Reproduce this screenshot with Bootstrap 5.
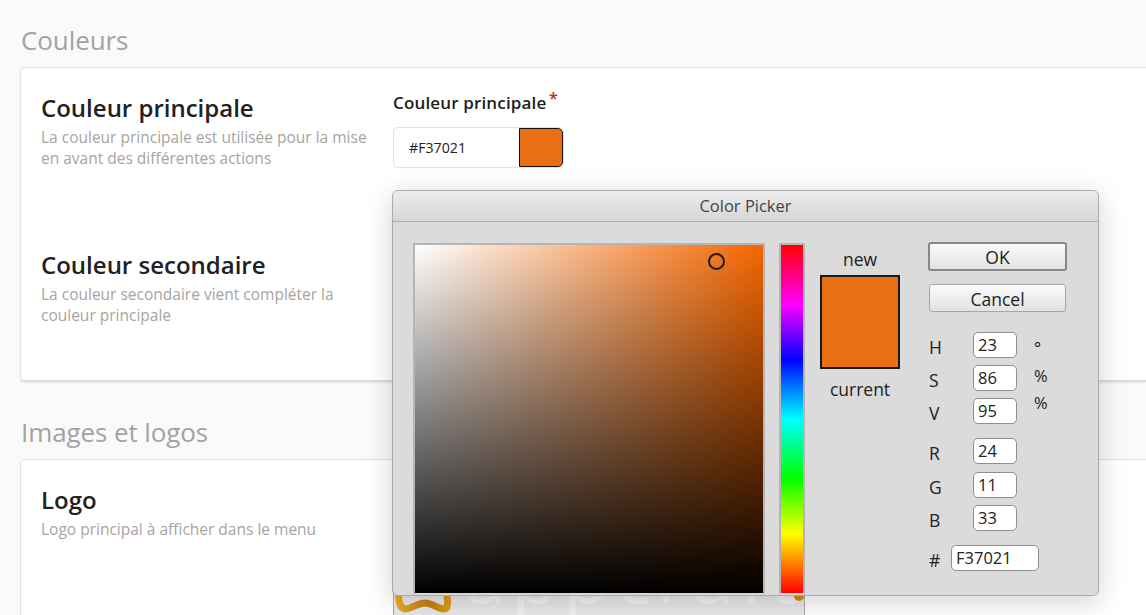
<!DOCTYPE html>
<html lang="fr">
<head>
  <meta charset="UTF-8" />
  <meta name="viewport" content="width=device-width, initial-scale=1.0"/>
  <title>Couleurs</title>
  <link href="https://cdn.jsdelivr.net/npm/bootstrap@5.3.0/dist/css/bootstrap.min.css" rel="stylesheet"/>
  <style>
    html, body { height: 100%; overflow: hidden; }
    body {
      font-family: "Open Sans", "Noto Sans", sans-serif;
      background-color: #fafafa;
      color: #212121;
    }
    .page-wrap { padding: 22px 0 0 20px; position: relative; }
    .section-title { font-size: 26px; line-height: 36px; font-weight: 400; color: #a3a3a3; margin: 0 0 9px 1px; letter-spacing: -.1px; }
    .panel-box { background: #fff; border: 1px solid #e2e2e2; border-right: 0; border-bottom: 2px solid #dcdcdc; border-radius: 5px 0 0 5px; padding: 23px 20px 0; }
    .panel-colors { height: 315px; margin-bottom: 32px; box-shadow: 0 1px 2px rgba(0,0,0,.08); }
    .panel-logo { height: 156px; padding-top: 23px; overflow: hidden; border-bottom: 0; border-radius: 5px 0 0 0; }
    .side-col { width: 352px; flex: none; }
    .block-title { font-size: 24px; line-height: 34px; font-weight: 600; margin: 0; }
    .block-help { font-size: 15.5px; line-height: 21px; color: #a8a4a0; margin: 2px 0 0; }
    .block-second { margin-top: 79px; }
    .field-label { font-size: 17px; line-height: 22px; font-weight: 600; letter-spacing: .15px; margin-top: 1px; margin-bottom: 13px; }
    .field-label sup { color: #c62828; font-size: 16px; top: -.3em; margin-left: -2px; }
    .color-field { width: 171px; height: 41px; border: 1px solid #e2e2e2; border-radius: 5px; font-size: 14.2px; padding-left: 15px; overflow: hidden; }
    .color-swatch { width: 44px; height: 100%; background: #e86f14; border: 1px solid #111; border-radius: 0 5px 5px 0; }
    .logo-box { width: 412px; height: 147px; margin-top: -15px; border: 1px solid #a8a8a8; border-bottom: 0; background: #e8e8e8; position: relative; overflow: hidden; }
    .logo-word { position: absolute; left: 70px; top: 62px; font-size: 78px; line-height: 84px; font-weight: 400; color: #f2f2f2; letter-spacing: 4px; white-space: nowrap; }
    .logo-dot { position: absolute; left: 400px; top: 122px; width: 10px; height: 10px; border-radius: 50%; background: #d98a14; }
    .logo-mark { position: absolute; left: 0; top: 117px; }

    .picker { position: absolute; left: 392px; top: 190px; width: 707px; height: 406px; background: #dbdbdb; border: 1px solid #aaa; border-radius: 6px; box-shadow: 0 6px 28px rgba(0,0,0,.18); font-size: 17.5px; color: #222; }
    .picker-head { height: 31px; line-height: 30px; text-align: center; font-size: 16.5px; color: #444; border-bottom: 1px solid #b0b0b0; background: linear-gradient(#ececec, #d6d6d6); border-radius: 5px 5px 0 0; }
    .picker-body { padding: 21px 0 0 20px; height: 373px; }
    .sat-box { width: 352px; height: 352px; border: 2px solid #b5b5b5; border-bottom-color: #d8d8d8; flex: none; position: relative; background: linear-gradient(to bottom, rgba(0,0,0,0), #000), linear-gradient(to right, #fff, #f56600); }
    .sat-cursor { position: absolute; left: 293px; top: 8px; width: 17px; height: 17px; border: 2px solid #1c1c1c; border-radius: 50%; }
    .hue-bar { width: 26px; height: 352px; flex: none; margin-left: 14px; border: 2px solid #b5b5b5; border-bottom-color: #d8d8d8; background: linear-gradient(to bottom, #f00 0%, #f0f 17%, #00f 33%, #0ff 50%, #0f0 67%, #ff0 83%, #f00 100%); }
    .preview-col { width: 80px; flex: none; margin-left: 15px; text-align: center; line-height: 22px; padding-top: 5px; }
    .preview-swatch { height: 94px; background: #e86f14; border: 2px solid #1a1a1a; margin: 5px 0 9px; }
    .values-col { width: 140px; flex: none; margin-left: 28px; margin-top: -1px; }
    .pick-btn { width: 137px; text-align: center; margin-left: 1px; border: 1px solid #a6a6a6; border-radius: 3px; background: linear-gradient(#fbfbfb, #e2e2e2); line-height: 28px; height: 28px; }
    .pick-btn-main { width: 139px; margin-left: 0; height: 29px; border: 2px solid #888; margin-bottom: 13px; line-height: 27px; }
    .value-row { height: 26px; margin-bottom: 7px; padding-left: 1px; }
    .value-name { width: 44px; flex: none; padding-top: 4px; line-height: 22px; }
    .value-input { width: 44px; height: 26px; background: #fff; border: 1px solid #8f8f8f; border-radius: 5px; padding-left: 4px; line-height: 24px; font-size: 16.5px; }
    .value-unit { margin-left: 17px; line-height: 20px; font-size: 16.5px; }
    .row-hsv { margin-top: 20px; }
    .row-rgb { margin-top: 14px; margin-bottom: 8px; }
    .row-hex { margin-top: 14px; }
    .hex-name { width: 22px; }
    .hex-input { width: 88px; }
    .h-unit { margin-top: 6px; }
    .s-unit { margin-top: 1px; }
    .v-unit { margin-top: -5px; }
  </style>
</head>
<body>

  <div class="page-wrap">
    <h2 class="section-title">Couleurs</h2>
    <div class="panel-box panel-colors d-flex">
      <div class="side-col">
        <h3 class="block-title">Couleur principale</h3>
        <p class="block-help">La couleur principale est utilisée pour la mise<br>en avant des différentes actions</p>
        <div class="block-second">
          <h3 class="block-title">Couleur secondaire</h3>
          <p class="block-help">La couleur secondaire vient compléter la<br>couleur principale</p>
        </div>
      </div>
      <div>
        <div class="field-label">Couleur principale <sup>*</sup></div>
        <div class="color-field d-flex align-items-center justify-content-between">
          <span>#F37021</span>
          <span class="color-swatch"></span>
        </div>
      </div>
    </div>

    <h2 class="section-title">Images et logos</h2>
    <div class="panel-box panel-logo d-flex">
      <div class="side-col">
        <h3 class="block-title">Logo</h3>
        <p class="block-help">Logo principal à afficher dans le menu</p>
      </div>
      <div>
        <div class="logo-box">
          <svg class="logo-mark" width="60" height="30" viewBox="0 0 60 30">
            <defs>
              <linearGradient id="ribbon" x1="0" x2="1" y1="0" y2="0">
                <stop offset="0" stop-color="#e6a824"/>
                <stop offset=".6" stop-color="#c47c12"/>
                <stop offset="1" stop-color="#dc9a1c"/>
              </linearGradient>
            </defs>
            <path d="M5 6c-1 7 0 16 6 17 6 0 13-6 20-6 7 0 13 6 19 6 4 0 4-6 3-14" fill="none" stroke="url(#ribbon)" stroke-width="7"/>
          </svg>
          <span class="logo-word">appcraft</span>
          <span class="logo-dot"></span>
        </div>
      </div>
    </div>
  </div>

  <!-- Color picker dialog -->
  <div class="picker">
    <div class="picker-head">Color Picker</div>
    <div class="picker-body d-flex">
      <div class="sat-box"><span class="sat-cursor"></span></div>
      <div class="hue-bar"></div>
      <div class="preview-col">
        <div>new</div>
        <div class="preview-swatch"></div>
        <div>current</div>
      </div>
      <div class="values-col">
        <div class="pick-btn pick-btn-main">OK</div>
        <div class="pick-btn">Cancel</div>
        <div class="value-row d-flex row-hsv"><span class="value-name">H</span><span class="value-input">23</span><span class="value-unit h-unit">°</span></div>
        <div class="value-row d-flex"><span class="value-name">S</span><span class="value-input">86</span><span class="value-unit s-unit">%</span></div>
        <div class="value-row d-flex"><span class="value-name">V</span><span class="value-input">95</span><span class="value-unit v-unit">%</span></div>
        <div class="value-row d-flex row-rgb"><span class="value-name">R</span><span class="value-input">24</span></div>
        <div class="value-row d-flex"><span class="value-name">G</span><span class="value-input">11</span></div>
        <div class="value-row d-flex"><span class="value-name">B</span><span class="value-input">33</span></div>
        <div class="value-row d-flex row-hex"><span class="value-name hex-name">#</span><span class="value-input hex-input">F37021</span></div>
      </div>
    </div>
  </div>

  <script src="https://cdn.jsdelivr.net/npm/bootstrap@5.3.0/dist/js/bootstrap.bundle.min.js"></script>
</body>
</html>
